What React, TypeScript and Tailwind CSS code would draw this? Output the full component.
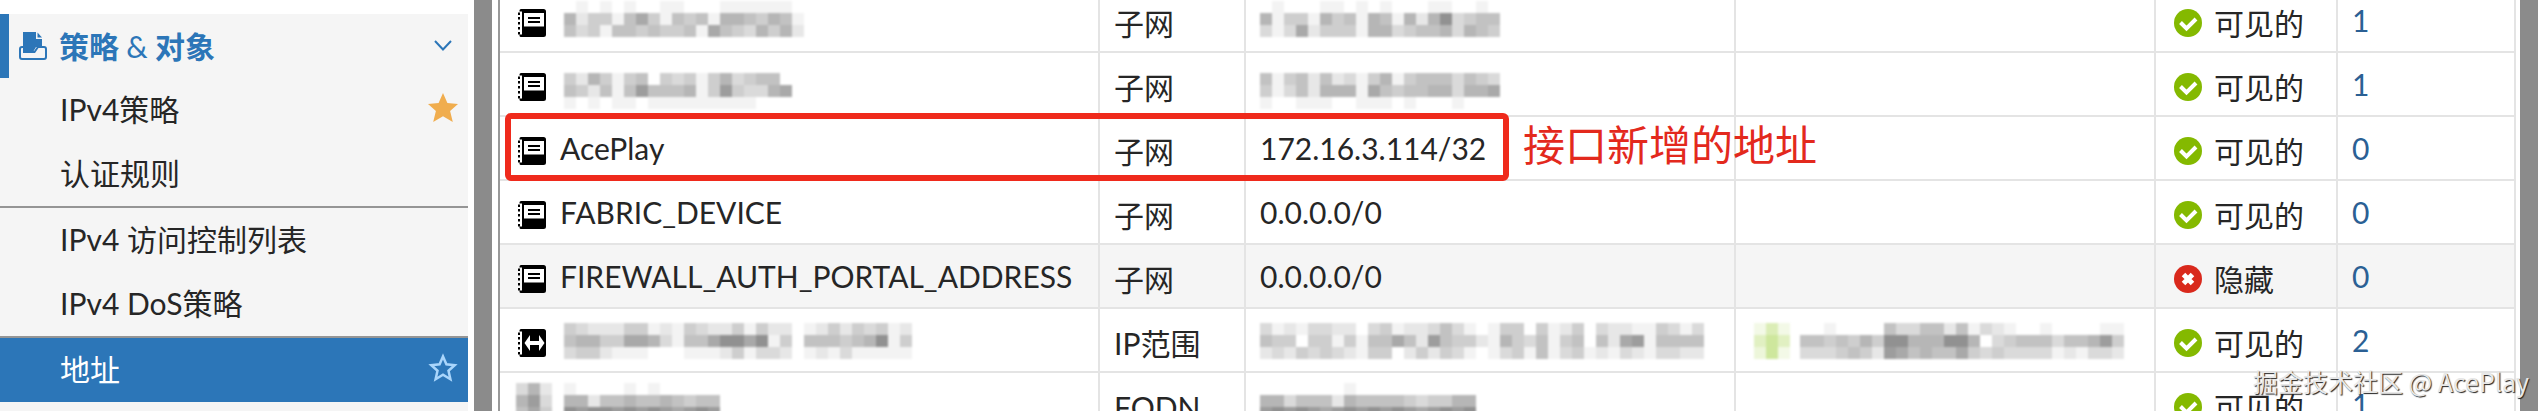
import React from "react";
import clsx from "clsx";

type AddressRow = {
  icon: "book" | "range" | "hidden";
  name?: string;
  nameMask?: string[];
  type: string;
  detail?: string;
  detailMask?: string[];
  ifaceMask?: string[];
  maskClass?: string;
  visible: boolean;
  refs: number;
  hover?: boolean;
  note?: string;
};

const rows: AddressRow[] = [
  {
    icon: "book",
    nameMask: ["01010100110001111110", "62441574154516654651", "53415545445175436462"],
    type: "子网",
    detailMask: ["01000110101000110010", "61441645165162693455", "31372444166345563654"],
    maskClass: "mt-3",
    visible: true,
    refs: 1,
  },
  {
    icon: "book",
    nameMask: ["4264145043414634550", "5425158555614843367", "1010110111111111000"],
    type: "子网",
    detailMask: ["51452523146145553543", "41352666175455663667", "10011100111010001000"],
    maskClass: "mt-5",
    visible: true,
    refs: 1,
  },
  {
    icon: "book",
    name: "AcePlay",
    type: "子网",
    detail: "172.16.3.114/32",
    visible: true,
    refs: 0,
    note: "接口新增的地址",
  },
  {
    icon: "book",
    name: "FABRIC_DEVICE",
    type: "子网",
    detail: "0.0.0.0/0",
    visible: true,
    refs: 0,
  },
  {
    icon: "book",
    name: "FIREWALL_AUTH_PORTAL_ADDRESS",
    type: "子网",
    detail: "0.0.0.0/0",
    visible: false,
    refs: 0,
    hover: true,
  },
  {
    icon: "range",
    nameMask: [
      "43222441214322414220124243412",
      "56644776315579979140555456914",
      "34421110001112413320121311111",
    ],
    type: "IP范围",
    detailMask: [
      "3121332203412235310144041240322114313",
      "5440441415575285442164351450527815555",
      "2324343214402424310134151341213213322",
    ],
    ifaceMask: [
      "001000053355251321001000011",
      "554546499666996034555355684",
      "333454287565574343333121332",
    ],
    maskClass: "mt-3.5",
    visible: true,
    refs: 2,
  },
  {
    icon: "hidden",
    nameMask: ["1000010100000", "6625565565455", "9899898987898"],
    type: "FQDN",
    detailMask: ["000000010000000000", "663555265555434466", "898987898989878989"],
    maskClass: "mt-2.5",
    visible: true,
    refs: 1,
  },
];

// each digit is the darkness of one 12px block
function Mask({
  data,
  className,
  color = "#000",
}: {
  data: string[];
  className?: string;
  color?: string;
}) {
  const width = data[0].length * 12;
  const height = data.length * 12;
  return (
    <svg
      width={width}
      height={height}
      className={clsx("shrink-0 self-start blur-[1px]", className)}
      shapeRendering="crispEdges"
      aria-hidden="true"
    >
      {data.map((line, y) =>
        line
          .split("")
          .map((level, x) => (
            <rect
              key={`${x}-${y}`}
              x={x * 12}
              y={y * 12}
              width={12}
              height={12}
              fill={color}
              fillOpacity={Number(level) * 0.048}
            />
          ))
      )}
    </svg>
  );
}

function BookIcon({ range }: { range?: boolean }) {
  return (
    <svg width="28" height="28" viewBox="0 0 28 28" className="mt-1.5 shrink-0" aria-hidden="true">
      <path d="M3 0h22.500q2.500 0 2.500 2.500v23q0 2.500-2.500 2.500H3q-1.500 0-1.500-1.500V25.500h2.500V2.500H1.500V1.500Q1.500 0 3 0z" />
      <path d="M0 3.500h2v2.500H0zM0 8h2v2.500H0zM0 13h2v2.500H0zM0 18h2v2.500H0zM0 23h2v2.500H0z" />
      {range ? (
        <path
          d="M6.500 14l5.500-8v6h9V6l5.500 8-5.500 8v-6h-9v6z"
          fill="#fff"
        />
      ) : (
        <>
          <path d="M6 4h20v13.500H6z" fill="#fff" />
          <path d="M10 8h12v2H10zM10 12h12v2H10z" />
        </>
      )}
    </svg>
  );
}

function StatusIcon({ visible }: { visible: boolean }) {
  return (
    <svg width="28" height="28" viewBox="0 0 28 28" className="shrink-0" aria-hidden="true">
      <circle cx="14" cy="14" r="14" fill={visible ? "#84b900" : "#d9291c"} />
      <path
        d={visible ? "M6.500 13.500l6 6 9.500-9.500" : "M9.500 9.500l9 9M18.500 9.500l-9 9"}
        fill="none"
        stroke="#fff"
        strokeWidth={visible ? 4 : 5}
      />
    </svg>
  );
}

function Star({ filled }: { filled?: boolean }) {
  return (
    <svg width="30" height="29" viewBox="0 0 30 29" className="mb-1 shrink-0" aria-hidden="true">
      <path
        d={
          filled
            ? "M15 0l4.400 10 10.600 1-7.900 7 2.700 11L15 23.300 5.200 29l2.700-11L0 11l10.600-1z"
            : "M15 3.500l3.400 7.800 8.300.9-6.200 5.500 1.900 8.500-7.400-4.400-7.400 4.400 1.900-8.500-6.200-5.500 8.300-.9z"
        }
        fill={filled ? "#f0ad4e" : "none"}
        stroke={filled ? "none" : "#a9d5fb"}
        strokeWidth="2.500"
      />
    </svg>
  );
}

function PolicyIcon() {
  return (
    <svg width="28" height="28" viewBox="0 0 28 28" className="shrink-0" aria-hidden="true">
      <path d="M4 0h13v7h6v8h-6l-3 5H4z" fill="#2c76b8" />
      <path d="M18.500.500l4.500 5h-4.500z" fill="#2c76b8" />
      <path
        d="M4 15H3q-2 0-2 2v8q0 2 2 2h22q2 0 2-2v-8q0-2-2-2h-6l-3.500 5H4"
        fill="none"
        stroke="#2c76b8"
        strokeWidth="2"
      />
    </svg>
  );
}

const menu = [
  { label: "IPv4策略", star: true },
  { label: "认证规则", divider: true },
  { label: "IPv4 访问控制列表" },
  { label: "IPv4 DoS策略", divider: true },
  { label: "地址", active: true, star: true },
];

function Sidebar() {
  return (
    <nav className="w-[468px] shrink-0 bg-[#f5f5f5]">
      <div className="h-3.5 bg-white" />
      <button
        type="button"
        className="flex h-16 w-full items-center border-l-[9px] border-[#2c76b8] pr-4 pl-2.5 font-bold text-[#2c76b8]"
      >
        <PolicyIcon />
        <span className="ml-3">
          策略 <span className="font-normal">&</span> 对象
        </span>
        <svg width="18" height="12" viewBox="0 0 18 12" className="ml-auto" aria-hidden="true">
          <path d="M1 1l8 8.500L17 1" fill="none" stroke="#2c76b8" strokeWidth="2" />
        </svg>
      </button>
      {menu.map((item) => (
        <a
          key={item.label}
          href="#"
          className={clsx(
            "flex items-center justify-between pr-2.5 pb-0.5 pl-[60px]",
            item.divider ? "h-[66px] border-b-2 border-[#959595]" : "h-16",
            item.active && "bg-[#2c76b8] text-white"
          )}
        >
          <span>{item.label}</span>
          {item.star && <Star filled={!item.active} />}
        </a>
      ))}
    </nav>
  );
}

function Cell({
  className,
  children,
}: {
  className?: string;
  children?: React.ReactNode;
}) {
  return (
    <td className="border-r-2 border-b-2 border-[#e4e4e4] p-0">
      <div className={clsx("flex h-[62px] items-center", className)}>{children}</div>
    </td>
  );
}

function AddressTable() {
  return (
    <table className="-mt-[11px] w-full table-fixed border-separate border-spacing-0 whitespace-nowrap">
      <colgroup>
        <col className="w-[600px]" />
        <col className="w-[146px]" />
        <col className="w-[490px]" />
        <col className="w-[420px]" />
        <col className="w-[182px]" />
        <col />
      </colgroup>
      <tbody>
        {rows.map((row, i) => (
          <tr key={i} className={row.hover ? "bg-[#f5f5f5]" : undefined}>
            <Cell className="relative pl-[18px]">
              {row.icon === "hidden" ? (
                <Mask data={["362", "683", "574"]} className={clsx("-ml-0.5", row.maskClass)} />
              ) : (
                <BookIcon range={row.icon === "range"} />
              )}
              {row.nameMask ? (
                <Mask
                  data={row.nameMask}
                  className={clsx(row.icon === "hidden" ? "ml-3" : "ml-[18px]", row.maskClass)}
                />
              ) : (
                <span className="ml-3.5">{row.name}</span>
              )}
              {row.note && (
                <div className="absolute -top-1 left-[5px] z-10 flex h-[68px] items-center">
                  <div className="h-full w-[1004px] rounded-md border-[6px] border-[#ef2a1c]" />
                  <span className="ml-3.5 pb-1 text-[42px] text-[#e3291d]">{row.note}</span>
                </div>
              )}
            </Cell>
            <Cell className="pt-1.5 pl-3.5">{row.type}</Cell>
            <Cell className="pl-3.5">
              {row.detailMask ? (
                <Mask data={row.detailMask} className={row.maskClass} />
              ) : (
                row.detail
              )}
            </Cell>
            <Cell className="pl-[18px]">
              {row.ifaceMask && (
                <>
                  <Mask
                    data={["262", "585", "382"]}
                    color="#80c000"
                    className={row.maskClass}
                  />
                  <Mask data={row.ifaceMask} className={clsx("ml-2.5", row.maskClass)} />
                </>
              )}
            </Cell>
            <Cell className="gap-3 pt-1.5 pl-[18px]">
              <StatusIcon visible={row.visible} />
              {row.visible ? "可见的" : "隐藏"}
            </Cell>
            <Cell className="pl-3.5">
              <a href="#" className="text-[#2b6094]">
                {row.refs}
              </a>
            </Cell>
          </tr>
        ))}
      </tbody>
    </table>
  );
}

export default function App() {
  return (
    <div className="relative flex h-screen overflow-hidden bg-white font-['Lato','Noto_Sans_CJK_SC',sans-serif] text-[30px] leading-9 text-[#262626]">
      <Sidebar />
      <div className="mx-1.5 w-[18px] shrink-0 bg-[#8b8b8b]" />
      <main className="min-w-0 flex-1 border-l-2 border-[#999]">
        <AddressTable />
      </main>
      <div className="mr-[5px] ml-1 w-[18px] shrink-0 bg-[#8b8b8b]" />
      <p className="absolute right-3.5 bottom-3 z-20 font-['Noto_Sans_CJK_SC',sans-serif] text-[25px] text-[#e8e8e8] [text-shadow:1px_1px_1px_#222]">
        掘金技术社区 @ AcePlay
      </p>
    </div>
  );
}
